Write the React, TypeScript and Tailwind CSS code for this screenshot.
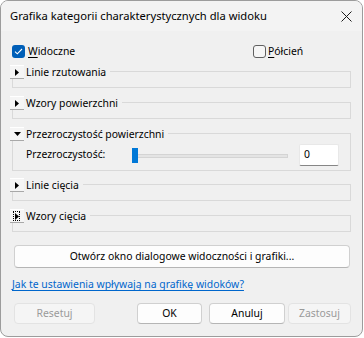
import React from "react";

const font = { fontFamily: '"Noto Sans", "Open Sans", sans-serif' };

function ExpandButton({ open, focus }: { open?: boolean; focus?: boolean }) {
  return (
    <div className="relative w-[14px] h-[14px] bg-[#f5f5f5] border-t border-t-white border-b border-[#a8a8a8] flex items-center justify-center shrink-0">
      {open ? (
        <svg width="7" height="4" viewBox="0 0 7 4">
          <path d="M0 0 L7 0 L3.5 4 Z" fill="#000" />
        </svg>
      ) : (
        <svg width="4" height="7" viewBox="0 0 4 7">
          <path d="M0 0 L4 3.5 L0 7 Z" fill="#000" />
        </svg>
      )}
      {focus && (
        <div className="absolute left-[3px] top-[1px] w-[7px] h-[10px] border border-dotted border-black" />
      )}
    </div>
  );
}

function Group({
  title,
  open,
  focus,
  className,
  children,
}: {
  title: string;
  open?: boolean;
  focus?: boolean;
  className?: string;
  children?: React.ReactNode;
}) {
  return (
    <div className={"border border-[#d9d9d9] " + (className ?? "")}>
      <div className="-mt-[7px] -ml-[3px] flex">
        <div className="flex items-center bg-[#f0f0f0] pr-[4px] h-[14px]">
          <ExpandButton open={open} focus={focus} />
          <span className="ml-[2px] text-[10.4px] leading-[14px] text-black whitespace-nowrap">{title}</span>
        </div>
      </div>
      {children ?? <div className="h-[8px]" />}
    </div>
  );
}

export default function App() {
  return (
    <div className="w-[364px] h-[338px] bg-white" style={font}>
      <div className="w-[363px] h-[337px] border border-[#9c9c9c] rounded-[8px] overflow-hidden bg-[#f0f0f0] flex flex-col">
        <div className="h-[30px] bg-[#f3f3f3] flex items-center justify-between pl-[9px] pr-[9px]">
          <span className="text-[11.2px] text-black whitespace-nowrap">
            Grafika kategorii charakterystycznych dla widoku
          </span>
          <svg width="11" height="11" viewBox="0 0 11 11" className="mr-[1px]">
            <path d="M0.5 0.5 L10.5 10.5 M10.5 0.5 L0.5 10.5" stroke="#1b1b1b" strokeWidth="1" />
          </svg>
        </div>
        <div className="flex flex-col px-[11px]">
          <div className="mt-[14px] h-[13px] flex items-center">
            <div className="w-[241px] flex items-center">
              <div className="w-[13px] h-[13px] rounded-[3px] bg-[#005fb8] flex items-center justify-center">
                <svg width="9" height="7" viewBox="0 0 9 7">
                  <path d="M1 3.6 L3.3 5.8 L8 1" stroke="#fff" strokeWidth="1.1" fill="none" />
                </svg>
              </div>
              <span className="ml-[3px] text-[10.4px] text-black">
                <span className="underline underline-offset-2">W</span>idoczne
              </span>
            </div>
            <div className="flex items-center">
              <div className="w-[13px] h-[13px] rounded-[3px] border border-[#606060] bg-[#f6f6f6]" />
              <span className="ml-[2px] text-[10.4px] text-black">
                <span className="underline underline-offset-2">P</span>ółcień
              </span>
            </div>
          </div>

          <Group title="Linie rzutowania" className="mt-[13px]" />
          <Group title="Wzory powierzchni" className="mt-[14px]" />
          <Group title="Przezroczystość powierzchni" open className="mt-[14px]">
            <div className="mt-[3px] mb-[4px] flex items-center pl-[13px]">
              <span className="w-[106px] text-[10.4px] text-black whitespace-nowrap">Przezroczystość:</span>
              <div className="relative w-[156px] h-[15px]">
                <div className="absolute left-0 right-0 top-[6px] h-[4px] bg-[#e4e4e4] border border-[#d4d4d4]" />
                <div className="absolute left-0 top-0 w-[6px] h-[15px] bg-[#0078d7]" />
              </div>
              <div className="ml-[11px] w-[40px] h-[22px] bg-white border border-[#e8e8e8] border-b-[#868686] rounded-[2px] flex items-center pl-[4px] text-[10.4px] text-black">
                0
              </div>
            </div>
          </Group>
          <Group title="Linie cięcia" className="mt-[13px]" />
          <Group title="Wzory cięcia" focus className="mt-[14px]" />

          <button className="mt-[13px] ml-[2px] mr-[1px] h-[23px] bg-[#fdfdfd] border border-[#d0d0d0] border-b-[#b5b5b5] rounded-[4px] text-[10.4px] text-black">
            Otwórz okno dialogowe widoczności i grafiki...
          </button>

          <div className="mt-[9px] h-[16px] flex items-center">
            <span className="text-[10.4px] text-[#0066cc] underline underline-offset-2 whitespace-nowrap">
              Jak te ustawienia wpływają na grafikę widoków?
            </span>
          </div>

          <div className="mt-[10px] flex">
            <button className="ml-[2px] w-[81px] h-[21px] bg-[#f5f5f5] border border-[#e3e3e3] rounded-[4px] text-[10.4px] text-[#9a9a9a]">
              Resetuj
            </button>
            <button className="ml-[42px] w-[65px] h-[21px] bg-[#fdfdfd] border border-[#d0d0d0] border-b-[#b5b5b5] rounded-[4px] text-[10.4px] text-black">
              OK
            </button>
            <button className="ml-[7px] w-[76px] h-[21px] bg-[#fdfdfd] border border-[#d0d0d0] border-b-[#b5b5b5] rounded-[4px] text-[10.4px] text-black">
              Anuluj
            </button>
            <button className="ml-[3px] w-[63px] h-[21px] bg-[#f5f5f5] border border-[#e3e3e3] rounded-[4px] text-[10.4px] text-[#9a9a9a]">
              Zastosuj
            </button>
          </div>
        </div>
      </div>
    </div>
  );
}
